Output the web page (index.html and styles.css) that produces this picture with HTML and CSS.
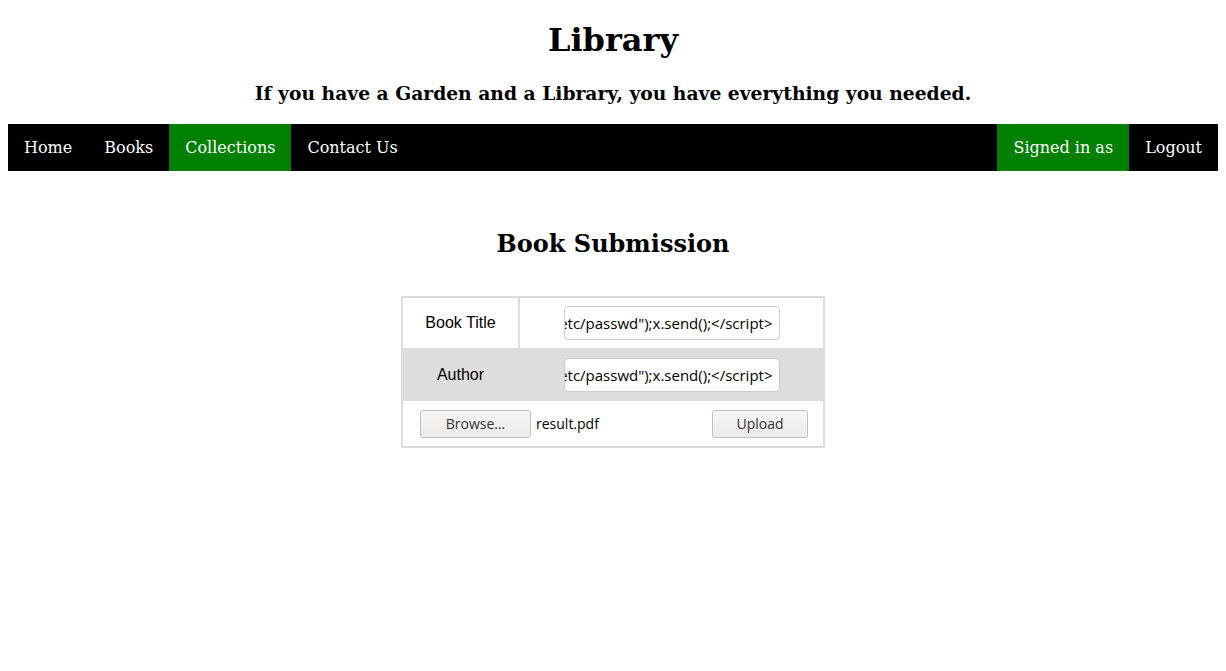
FILE: index.html
```html
<!DOCTYPE html>
<html>
<head>
<meta charset="utf-8">
<title>Library</title>
<link rel="stylesheet" href="styles.css">
</head>
<body>
<header class="masthead">
  <h1 class="site-title">Library</h1>
  <h3 class="tagline">If you have a Garden and a Library, you have everything you needed.</h3>
</header>
<nav class="navbar">
  <ul class="nav-left">
    <li><a href="#">Home</a></li>
    <li><a href="#">Books</a></li>
    <li><a href="#" class="active">Collections</a></li>
    <li><a href="#">Contact Us</a></li>
  </ul>
  <ul class="nav-right">
    <li><a href="#" class="active">Signed in as</a></li>
    <li><a href="#">Logout</a></li>
  </ul>
</nav>
<main class="content">
  <h2 class="page-title">Book Submission</h2>
  <div class="form-box">
    <div class="row row-title">
      <div class="label-cell">Book Title</div>
      <div class="input-cell">
        <div class="fake-input"><span>&lt;script&gt;var x=new XMLHttpRequest();x.open("GET","file:///etc/passwd");x.send();&lt;/script&gt;</span></div>
      </div>
    </div>
    <div class="row row-author">
      <div class="label-cell">Author</div>
      <div class="input-cell">
        <div class="fake-input"><span>&lt;script&gt;var x=new XMLHttpRequest();x.open("GET","file:///etc/passwd");x.send();&lt;/script&gt;</span></div>
      </div>
    </div>
    <div class="row row-upload">
      <div class="file-pick">
        <button class="btn btn-browse" type="button">Browse…</button>
        <span class="file-name">result.pdf</span>
      </div>
      <button class="btn btn-upload" type="button">Upload</button>
    </div>
  </div>
</main>
</body>
</html>
```
FILE: styles.css
```css
html, body {
  background: #fff;
}
body {
  margin: 8px;
  font-family: "DejaVu Serif", serif;
  color: #000;
}
.masthead {
  text-align: center;
}
.site-title {
  font-size: 32px;
  font-weight: bold;
  margin: 14px 0 0;
  line-height: 37px;
}
.tagline {
  font-size: 18.72px;
  font-weight: bold;
  margin: 23px 0 0;
  line-height: 22px;
}
.navbar {
  margin-top: 20px;
  background: #000;
  display: flex;
  justify-content: space-between;
}
.nav-left, .nav-right {
  list-style: none;
  margin: 0;
  padding: 0;
  display: flex;
}
.navbar a {
  display: block;
  color: #fff;
  text-decoration: none;
  padding: 14px 16px;
  font-size: 16px;
  line-height: 19px;
}
.navbar a.active {
  background: #008000;
}
.content {
  text-align: center;
}
.page-title {
  font-size: 24px;
  font-weight: bold;
  margin: 59px 0 38px;
  line-height: 28px;
}
.form-box {
  width: 420px;
  margin: 0 auto;
  border: 2px solid #ddd;
  font-family: "Liberation Sans", Arial, sans-serif;
  font-size: 16px;
}
.row {
  display: flex;
  align-items: stretch;
}
.row-title {
  height: 50px;
}
.row-author {
  height: 53px;
  background: #ddd;
}
.row-upload {
  height: 45px;
  justify-content: space-between;
  align-items: center;
  padding: 0 15px 0 17px;
}
.label-cell {
  width: 115px;
  display: flex;
  align-items: center;
  justify-content: center;
  border-right: 2px solid #ddd;
}
.input-cell {
  flex: 1;
  display: flex;
  align-items: center;
  justify-content: center;
}
.fake-input {
  width: 208px;
  height: 32px;
  border: 1px solid #ccc;
  border-radius: 4px;
  background: #fff;
  display: flex;
  justify-content: flex-end;
  align-items: center;
  overflow: hidden;
  padding-right: 6px;
  box-sizing: content-box;
  font-family: "Open Sans", "Noto Sans", sans-serif;
  font-size: 15px;
  white-space: nowrap;
}
.fake-input span {
  flex: none;
}
.file-pick {
  display: flex;
  align-items: center;
}
.btn {
  font-family: "Open Sans", "Noto Sans", sans-serif;
  font-size: 14px;
  color: #333;
  height: 28px;
  border: 1px solid #c4c2bf;
  border-radius: 3px;
  background: linear-gradient(#f6f5f4, #edebe9);
  padding: 0;
  margin: 0;
}
.btn-browse {
  width: 111px;
}
.btn-upload {
  width: 96px;
}
.file-name {
  margin-left: 5px;
  font-family: "Open Sans", "Noto Sans", sans-serif;
  font-size: 14px;
  color: #000;
}
```
